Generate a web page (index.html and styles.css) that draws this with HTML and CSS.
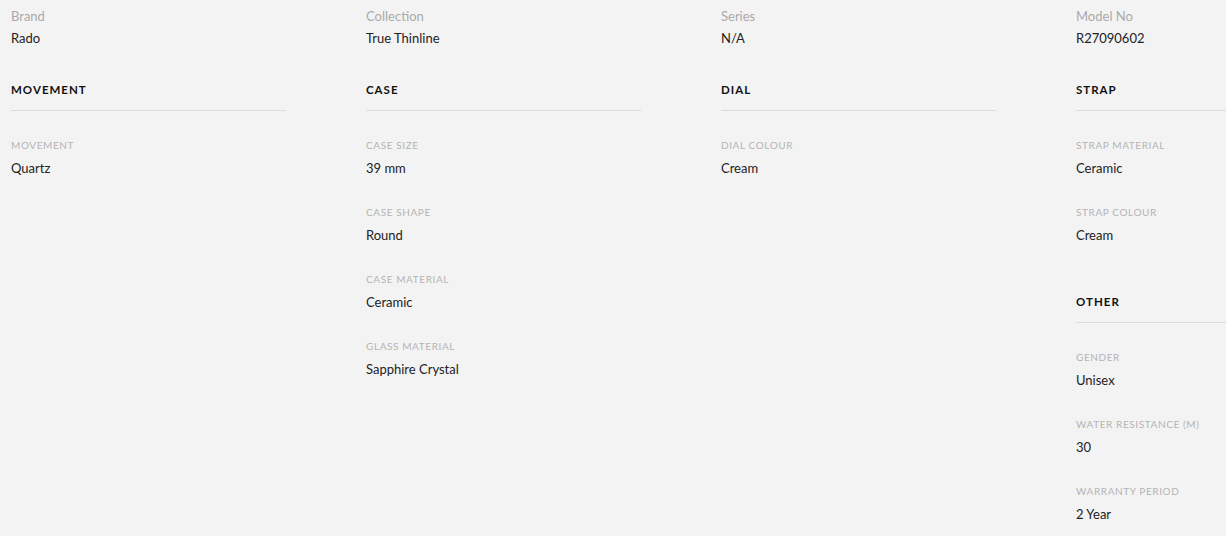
FILE: index.html
```html
<!DOCTYPE html>
<html>
<head>
<meta charset="utf-8">
<link rel="stylesheet" href="styles.css">
</head>
<body>
<div class="specs">
  <div class="col">
    <div class="top"><div class="top-label">Brand</div><div class="top-value">Rado</div></div>
    <div class="section first">
      <h3 class="head">MOVEMENT</h3>
      <div class="item"><div class="label">MOVEMENT</div><div class="value">Quartz</div></div>
    </div>
  </div>
  <div class="col">
    <div class="top"><div class="top-label">Collection</div><div class="top-value">True Thinline</div></div>
    <div class="section first">
      <h3 class="head">CASE</h3>
      <div class="item"><div class="label">CASE SIZE</div><div class="value">39 mm</div></div>
      <div class="item"><div class="label">CASE SHAPE</div><div class="value">Round</div></div>
      <div class="item"><div class="label">CASE MATERIAL</div><div class="value">Ceramic</div></div>
      <div class="item"><div class="label">GLASS MATERIAL</div><div class="value">Sapphire Crystal</div></div>
    </div>
  </div>
  <div class="col">
    <div class="top"><div class="top-label">Series</div><div class="top-value">N/A</div></div>
    <div class="section first">
      <h3 class="head">DIAL</h3>
      <div class="item"><div class="label">DIAL COLOUR</div><div class="value">Cream</div></div>
    </div>
  </div>
  <div class="col">
    <div class="top"><div class="top-label">Model No</div><div class="top-value">R27090602</div></div>
    <div class="section first">
      <h3 class="head">STRAP</h3>
      <div class="item"><div class="label">STRAP MATERIAL</div><div class="value">Ceramic</div></div>
      <div class="item"><div class="label">STRAP COLOUR</div><div class="value">Cream</div></div>
    </div>
    <div class="section next">
      <h3 class="head">OTHER</h3>
      <div class="item"><div class="label">GENDER</div><div class="value">Unisex</div></div>
      <div class="item"><div class="label">WATER RESISTANCE (M)</div><div class="value">30</div></div>
      <div class="item"><div class="label">WARRANTY PERIOD</div><div class="value">2 Year</div></div>
    </div>
  </div>
</div>
</body>
</html>
```

FILE: styles.css
```css
html, body {
  margin: 0;
  padding: 0;
  background: #f3f3f3;
  overflow: hidden;
}
body {
  font-family: Lato, "Open Sans", sans-serif;
  color: #222;
}
.specs {
  display: grid;
  grid-template-columns: repeat(3, 275px) minmax(0, 1fr);
  column-gap: 80px;
  padding: 6px 0 0 11px;
}
.top-label {
  font-size: 13px;
  line-height: 20px;
  color: #aaa;
}
.top-value {
  font-size: 13px;
  line-height: 20px;
  margin-top: 2px;
  color: #222;
}
.section.first { margin-top: 32px; }
.section.next { margin-top: 47px; }
.head {
  margin: 0;
  font-size: 11.5px;
  line-height: 20px;
  font-weight: 700;
  letter-spacing: 1px;
  color: #111;
  padding-bottom: 10px;
  border-bottom: 1px solid #dcdcdc;
}
.item { padding-top: 24px; }
.label {
  font-size: 10px;
  line-height: 20px;
  letter-spacing: 0.6px;
  color: #b4b4b4;
  white-space: nowrap;
}
.value {
  font-size: 13px;
  line-height: 20px;
  margin-top: 3px;
  color: #222;
}
```
